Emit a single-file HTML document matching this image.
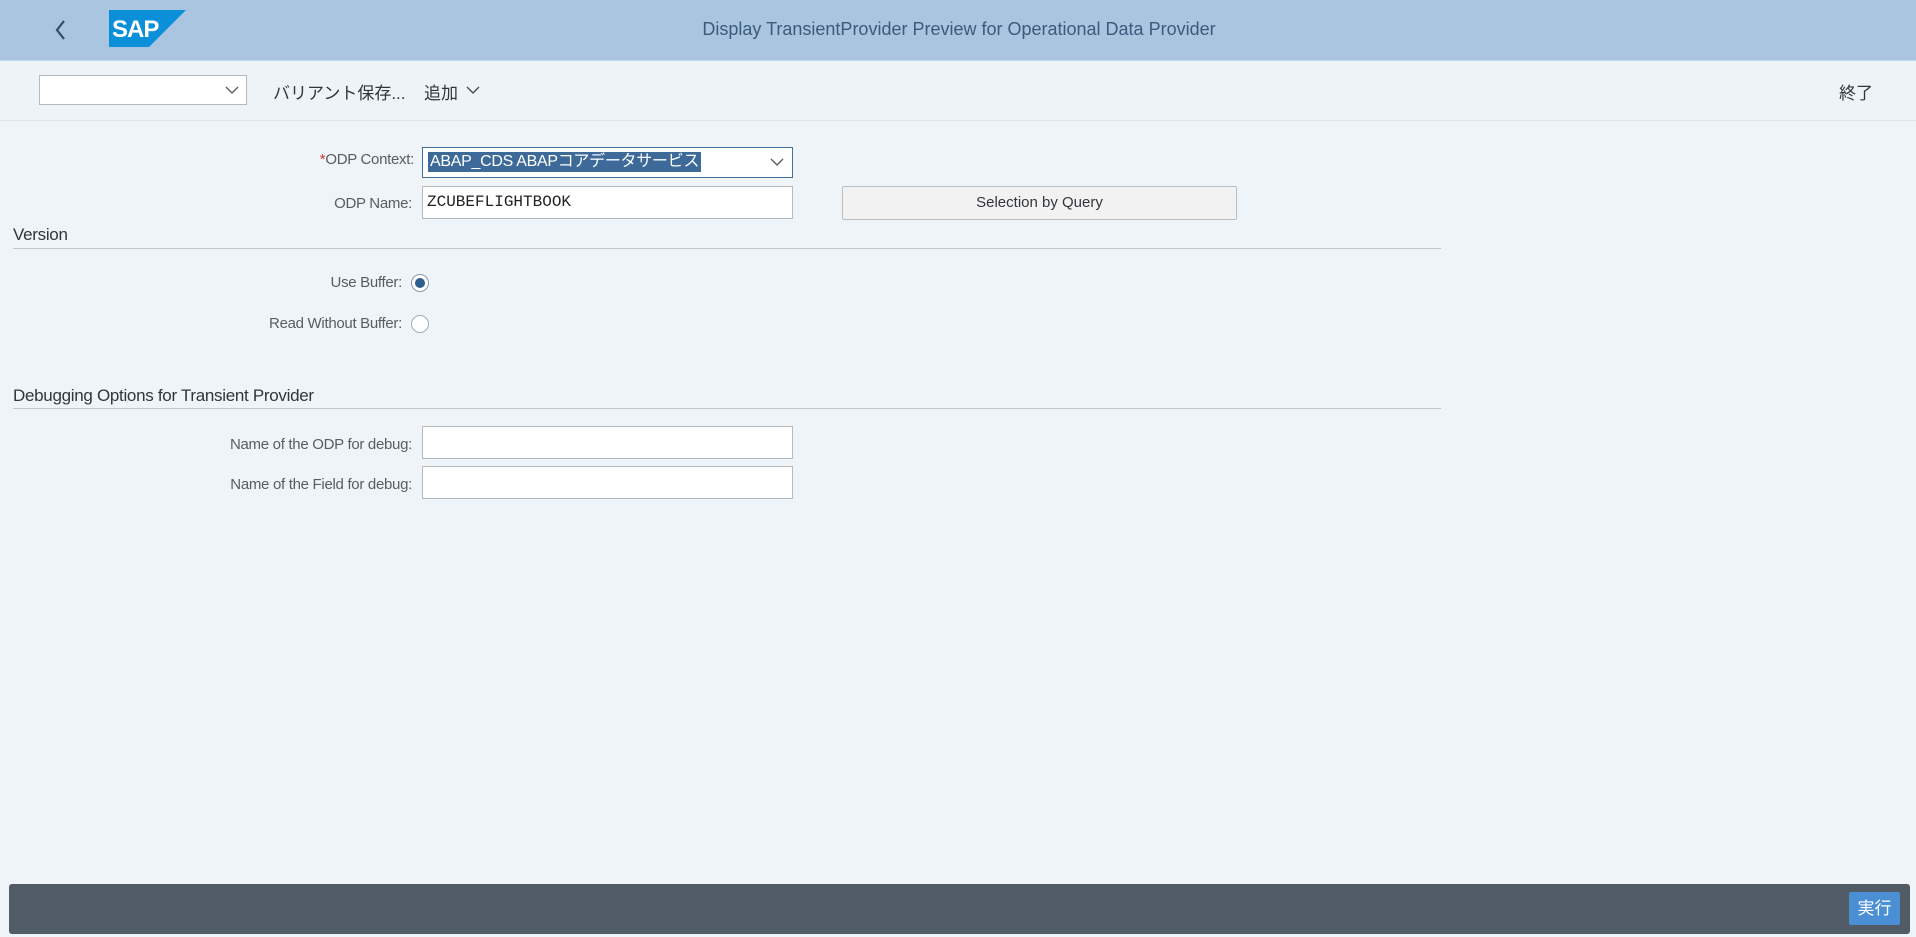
<!DOCTYPE html>
<html><head><meta charset="utf-8"><style>
*{box-sizing:border-box;margin:0;padding:0}
body{width:1916px;height:937px;background:#eff4f8;font-family:"Liberation Sans","Noto Sans CJK JP",sans-serif;color:#32363a;position:relative;overflow:hidden;font-size:15px}
.a{position:absolute}
.hdr{left:0;top:0;width:1916px;height:60px;background:#a9c5df}
.tb{left:0;top:60px;width:1916px;height:61px;background:#eef3f8;border-top:1px solid #c5d6e6;border-bottom:1px solid #d7e2ec}
.inp{background:#fff;border:1px solid #b4b9be}
.lbl{text-align:right;color:#5a5d60;font-size:15px;letter-spacing:-0.3px}
.sec{font-size:17px;color:#32363a;letter-spacing:-0.3px}
.line{height:1px;background:#c1c7cd;left:13px;width:1428px}
</style></head><body>
<div class="a hdr"></div>
<svg class="a" style="left:54px;top:19px" width="14" height="22" viewBox="0 0 14 22"><path d="M10 2 L3 11 L10 20" fill="none" stroke="#2c4e6e" stroke-width="2.2"/></svg>
<svg class="a" style="left:109px;top:10px" width="77" height="37" viewBox="0 0 77 37"><path d="M0 0H77L40 37H0Z" fill="#0a8fd8"/><text x="3" y="27" font-family="Liberation Sans" font-weight="bold" font-size="24" fill="#fff" letter-spacing="-1">SAP</text></svg>
<div class="a" style="left:659px;top:19px;width:600px;text-align:center;font-size:18px;color:#3a5b7c;white-space:nowrap">Display TransientProvider Preview for Operational Data Provider</div>
<div class="a tb"></div>
<div class="a inp" style="left:39px;top:75px;width:208px;height:30px"></div>
<svg class="a" style="left:225px;top:86px" width="14" height="9"><path d="M1 1L7 7L13 1" fill="none" stroke="#555" stroke-width="1.3"/></svg>
<div class="a" style="left:273px;top:79px;font-size:17px;color:#32363a">バリアント保存...</div>
<div class="a" style="left:424px;top:79px;font-size:17px;color:#32363a">追加</div>
<svg class="a" style="left:466px;top:86px" width="14" height="9"><path d="M1 1L7 7L13 1" fill="none" stroke="#444" stroke-width="1.3"/></svg>
<div class="a" style="left:1839px;top:79px;font-size:17px;color:#32363a">終了</div>

<div class="a lbl" style="left:200px;top:151px;width:214px"><span style="color:#c33">*</span>ODP Context:</div>
<div class="a inp" style="left:422px;top:147px;width:371px;height:31px;border:1px solid #3f6f9c"></div>
<div class="a" style="left:428px;top:152px;height:20px;background:#3d6a98;color:#fff;font-size:16px;padding:0 2px;line-height:20px;letter-spacing:-0.3px">ABAP_CDS ABAPコアデータサービス</div>
<svg class="a" style="left:770px;top:158px" width="14" height="9"><path d="M1 1L7 7L13 1" fill="none" stroke="#555" stroke-width="1.3"/></svg>
<div class="a lbl" style="left:200px;top:195px;width:212px">ODP Name:</div>
<div class="a inp" style="left:422px;top:186px;width:371px;height:33px"></div>
<div class="a" style="left:427px;top:193px;font-family:'Liberation Mono',monospace;font-size:16px;color:#222">ZCUBEFLIGHTBOOK</div>
<div class="a" style="left:842px;top:186px;width:395px;height:34px;background:#f2f2f2;border:1px solid #b9bec3;border-radius:2px;text-align:center;line-height:32px;font-size:15px;color:#32363a">Selection by Query</div>

<div class="a sec" style="left:13px;top:225px">Version</div>
<div class="a line" style="top:248px"></div>
<div class="a lbl" style="left:200px;top:274px;width:202px">Use Buffer:</div>
<div class="a" style="left:411px;top:274px;width:18px;height:18px;border-radius:50%;border:1px solid #8a9aa8;background:#fff"></div>
<div class="a" style="left:415px;top:278px;width:10px;height:10px;border-radius:50%;background:#2f5f8f"></div>
<div class="a lbl" style="left:200px;top:315px;width:202px">Read Without Buffer:</div>
<div class="a" style="left:411px;top:315px;width:18px;height:18px;border-radius:50%;border:1px solid #a0acb6;background:#fff"></div>

<div class="a sec" style="left:13px;top:386px">Debugging Options for Transient Provider</div>
<div class="a line" style="top:408px"></div>
<div class="a lbl" style="left:150px;top:436px;width:262px">Name of the ODP for debug:</div>
<div class="a inp" style="left:422px;top:426px;width:371px;height:33px"></div>
<div class="a lbl" style="left:150px;top:476px;width:262px">Name of the Field for debug:</div>
<div class="a inp" style="left:422px;top:466px;width:371px;height:33px"></div>

<div class="a" style="left:9px;top:884px;width:1901px;height:50px;background:#515b65;border-radius:3px"></div>
<div class="a" style="left:1849px;top:892px;width:51px;height:33px;background:#4a8fd3;border-radius:2px;color:#fff;font-size:17px;text-align:center;line-height:33px">実行</div>
</body></html>
